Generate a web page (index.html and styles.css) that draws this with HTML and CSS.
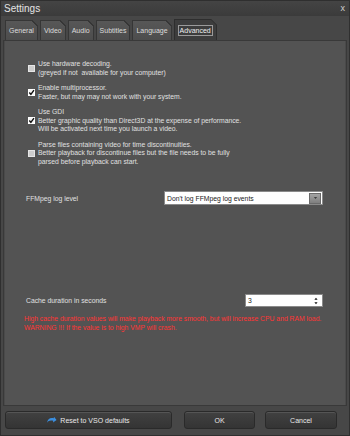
FILE: index.html
```html
<!DOCTYPE html>
<html lang="en">
<head>
  <meta charset="UTF-8">
  <title>Settings</title>
  <link rel="stylesheet" href="styles.css">
</head>
<body>
  <div class="window">
    <div class="titlebar">
      <span class="title">Settings</span>
      <span class="close">x</span>
    </div>

    <div class="tabs">
      <div class="tab">General</div>
      <div class="tab">Video</div>
      <div class="tab">Audio</div>
      <div class="tab">Subtitles</div>
      <div class="tab">Language</div>
      <div class="tab active"><span class="focus">Advanced</span></div>
    </div>

    <div class="panel">
      <div class="options">
        <div class="opt">
          <span class="check"></span>
          <span class="desc">Use hardware decoding.<br>(greyed if not&nbsp; available for your computer)</span>
        </div>
        <div class="opt">
          <span class="check on"><svg viewBox="0 0 8 8"><path d="M1.5 4 L3.3 6.2 L6.8 1.2" /></svg></span>
          <span class="desc">Enable multiprocessor.<br>Faster, but may may not work with your system.</span>
        </div>
        <div class="opt">
          <span class="check on"><svg viewBox="0 0 8 8"><path d="M1.5 4 L3.3 6.2 L6.8 1.2" /></svg></span>
          <span class="desc">Use GDI<br>Better graphic quality than Direct3D at the expense of performance.<br>Will be activated next time you launch a video.</span>
        </div>
        <div class="opt">
          <span class="check"></span>
          <span class="desc">Parse files containing video for time discontinuities.<br>Better playback for discontinue files but the file needs to be fully<br>parsed before playback can start.</span>
        </div>
      </div>

      <div class="row ffmpeg">
        <span class="label">FFMpeg log level</span>
        <div class="select">
          <span>Don't log FFMpeg log events</span>
          <span class="drop"><svg viewBox="0 0 6 4"><path d="M1 1 L5 1 L3 3 Z" /></svg></span>
        </div>
      </div>

      <div class="row cache">
        <span class="label">Cache duration in seconds</span>
        <div class="spin">
          <span>3</span>
          <svg class="spin-arrows" viewBox="0 0 5 9"><path d="M2.5 0.5 L4.5 3 L0.5 3 Z M0.5 6 L4.5 6 L2.5 8.5 Z" /></svg>
        </div>
      </div>

      <p class="warn">High cache duration values will make playback more smooth, but will increase CPU and RAM load.<br>WARNING !!! If the value is to high VMP will crash.</p>
    </div>

    <div class="footer">
      <button class="btn reset">
        <svg class="reset-icon" viewBox="0 0 10 8">
          <path d="M0.5 3.2 L3.6 0.4 L3.6 2 C6.8 1.8 9.2 3 9.5 7.5 C8.4 5.2 6.6 4.4 3.6 4.6 L3.6 6.2 Z" />
        </svg>
        Reset to VSO defaults
      </button>
      <button class="btn ok">OK</button>
      <button class="btn cancel">Cancel</button>
    </div>
  </div>
</body>
</html>
```

FILE: styles.css
```css
body {
  margin: 0;
  background-color: #3a3a3a;
  font-family: 'Liberation Sans', Arial, sans-serif;
}

.window {
  width: 350px;
  height: 436px;
  box-sizing: border-box;
  background-color: #474747;
  border: 1px solid #2f2f2f;
  color: #e2e2e2;
  display: flex;
  flex-direction: column;
}

.titlebar {
  height: 15px;
  background: linear-gradient(#444, #3b3b3b);
  display: flex;
  align-items: center;
  justify-content: space-between;
  padding: 0 4px 0 3px;
}

.title {
  font-size: 10px;
  color: #e4e4e4;
}

.close {
  font-size: 9px;
  color: #cfcfcf;
  line-height: 9px;
}

.tabs {
  height: 24px;
  box-sizing: border-box;
  display: flex;
  align-items: flex-end;
  gap: 2px;
  padding-left: 4px;
}

.tab {
  position: relative;
  height: 20px;
  box-sizing: border-box;
  padding: 0 3px;
  display: flex;
  align-items: center;
  font-size: 7px;
  color: #dcdcdc;
  background: linear-gradient(#575757, #4d4d4d);
  border: 1px solid #363636;
  border-bottom: none;
}

.tab::after {
  content: "";
  position: absolute;
  top: -1px;
  right: -1px;
  width: 6px;
  height: 6px;
  background: linear-gradient(to bottom left, #474747 48%, #363636 48%, #363636 62%, transparent 62%);
}

.tab.active {
  height: 21px;
  padding: 0 3px;
  background: #3d3d3d;
  border-color: #2e2e2e;
}

.focus {
  border: 1px solid #9a9a9a;
  padding: 1px 1px;
  color: #f0f0f0;
}

.panel {
  height: 366px;
  box-sizing: border-box;
  margin: 0 2px;
  background-color: #535353;
  border: 1px solid #393939;
  box-shadow: inset 1px 0 0 #4a4a4a, inset -1px 0 0 #4a4a4a;
  display: flex;
  flex-direction: column;
  font-size: 6.8px;
  color: #e0e0e0;
}

.options {
  display: flex;
  flex-direction: column;
  gap: 7px;
  padding: 19px 0 0 24px;
}

.opt {
  display: flex;
  align-items: center;
  gap: 2px;
  line-height: 8.5px;
}

.check {
  width: 7px;
  height: 7px;
  box-sizing: border-box;
  background-color: #cdcdcd;
  border: 1px solid #e6e6e6;
  display: flex;
}

.check.on {
  background-color: #f4f4f4;
  border-color: #ffffff;
}

.check svg {
  width: 7px;
  height: 7px;
  margin: -1px;
  fill: none;
  stroke: #111;
  stroke-width: 1.6;
}

.desc {
  padding-left: 1px;
}

.row {
  display: flex;
  align-items: center;
  justify-content: space-between;
  padding: 0 23px 0 22px;
}

.ffmpeg {
  margin-top: 25px;
}

.select {
  width: 159px;
  height: 14px;
  box-sizing: border-box;
  background-color: #fff;
  border: 1px solid #8a8a8a;
  color: #222;
  display: flex;
  align-items: center;
  justify-content: space-between;
  padding: 0 1px 0 2px;
}

.drop {
  width: 12px;
  height: 11px;
  box-sizing: border-box;
  background: linear-gradient(#a3a3a3, #7f7f7f);
  border: 1px solid #6a6a6a;
  display: flex;
  align-items: center;
  justify-content: center;
}

.drop svg {
  width: 5px;
  height: 4px;
  fill: #222;
}

.cache {
  margin-top: 89px;
}

.spin {
  width: 78px;
  height: 13px;
  box-sizing: border-box;
  background-color: #fff;
  border: 1px solid #8a8a8a;
  color: #222;
  display: flex;
  align-items: center;
  justify-content: space-between;
  padding: 0 4px 0 2px;
}

.spin-arrows {
  width: 4px;
  height: 8px;
  fill: #111;
}

.warn {
  margin: 8px 0 0 20px;
  line-height: 8.5px;
  color: #ff3535;
}

.footer {
  display: flex;
  padding: 5px 0 0 4px;
}

.btn {
  height: 18px;
  box-sizing: border-box;
  border: 1px solid #2a2a2a;
  border-radius: 3px;
  background: linear-gradient(#414141, #343434);
  box-shadow: inset 0 1px 0 #555;
  color: #e8e8e8;
  font-family: 'Liberation Sans', Arial, sans-serif;
  font-size: 7px;
  display: flex;
  align-items: center;
  justify-content: center;
  padding: 0;
}

.reset {
  width: 167px;
  gap: 3px;
}

.reset-icon {
  width: 10px;
  height: 8px;
  fill: #3b8fe0;
  transform: scaleX(-1) rotate(-10deg);
}

.ok {
  width: 71px;
  margin-left: 12px;
}

.cancel {
  width: 72px;
  margin-left: 10px;
}
```
